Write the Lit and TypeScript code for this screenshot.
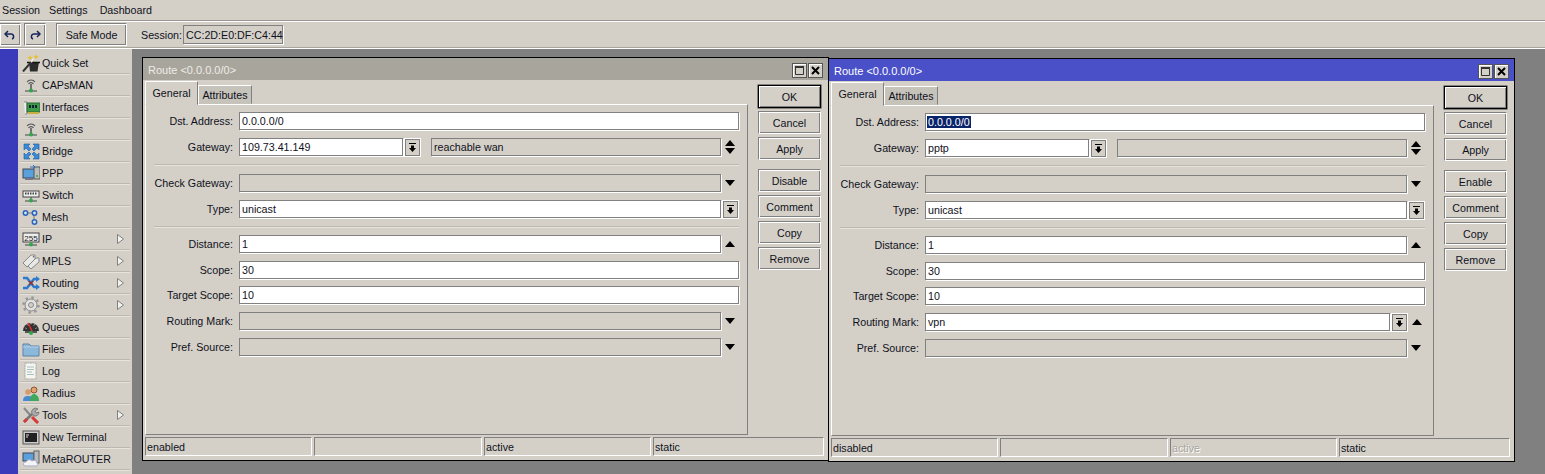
import { LitElement, html, css, svg } from "lit";
import { customElement } from "lit/decorators.js";

const base = svg`<path d="M3 15h12" stroke="#444" stroke-width="1"/><circle cx="9" cy="14.5" r="2" fill="#2fa84a"/>`;
const antenna = svg`<path d="M5 6a5 5 0 0 1 8 0M6.5 8a3 3 0 0 1 5 0" fill="none" stroke="#555" stroke-width="1.2"/><path d="M9 8v6" stroke="#555" stroke-width="1.5"/>${base}`;
const ICONS: Record<string, unknown> = {
  quick: svg`<path d="M7 8h10l-1.500 9.500H8z" fill="#2c2c2c"/><path d="M5 8.500h13" stroke="#111" stroke-width="1.500"/><path d="M1 17.500 11 6" stroke="#333" stroke-width="2"/><path d="M9 8l2.500-3" stroke="#eee" stroke-width="2"/><path d="M8 1l.8 2 2 .7-2 .7-.8 2-.8-2-2-.7 2-.7zM14 0l.8 2 2 .7-2 .7-.8 2-.8-2-2-.7 2-.7z" fill="#e8c020"/>`,
  caps: antenna,
  ifaces: svg`<path d="M2 4h3v12H3" fill="#eee" stroke="#888"/><rect x="5" y="5" width="13" height="9" fill="#3f9a4a" stroke="#2c6a34"/><path d="M7 7h2v3H7zM10 7h2v3h-2zM13 7h2v3h-2z" fill="#123"/><path d="M6 14h11v2H6z" fill="#c8b040"/>`,
  wireless: antenna,
  bridge: svg`<g fill="#3a8ad8" stroke="#1c5c9c" stroke-width=".6"><path d="M2 2h6L6 4l3 3-2 2-3-3-2 2zM17 2v6l-2-2-3 3-2-2 3-3-2-2zM2 17v-6l2 2 3-3 2 2-3 3 2 2zM17 17h-6l2-2-3-3 2-2 3 3 2-2z"/></g>`,
  ppp: svg`<rect x="1" y="5" width="12" height="9" fill="#5aa0dc" stroke="#445"/><rect x="12" y="3" width="6" height="12" fill="#bbb" stroke="#555"/><path d="M3 14h8v2H3z" fill="#778"/><path d="M8 3h5M11 1l2 2-2 2" stroke="#2a70c0" fill="none"/><circle cx="15" cy="12" r="1" fill="#2fa84a"/>`,
  switch: svg`<rect x="1" y="5" width="16" height="6" fill="#eee" stroke="#444"/><path d="M3 7.500h12" stroke="#444" stroke-width="2" stroke-dasharray="1.500 1"/><path d="M9 11v3" stroke="#555"/>${base}`,
  mesh: svg`<path d="M4 5h6M12 7v7" stroke="#777" fill="none"/><g fill="#cfe2f6" stroke="#2c64b8" stroke-width="1.500"><circle cx="3.500" cy="5" r="2.200"/><circle cx="12.500" cy="5" r="2.200"/><circle cx="12.500" cy="14" r="2.200"/></g>`,
  ip: svg`<rect x="1" y="3" width="16" height="9" fill="#eee" stroke="#444"/><text x="9" y="10.500" font-size="8" font-family="Liberation Sans" text-anchor="middle" fill="#222">255</text>${base}`,
  mpls: svg`<path d="M1 11 9 3h4v4l-8 8zM6 14 14 6h3v4l-8 7z" fill="#e8e8e4" stroke="#888"/><circle cx="11.500" cy="4.800" r=".8" fill="#666"/>`,
  routing: svg`<path d="M1 4h4l7 9h3M1 14h4l7-9h3" fill="none" stroke="#2a7ad0" stroke-width="2.500"/><path d="M14 2l4 3-4 3zM14 10l4 3-4 3z" fill="#2a7ad0"/><path d="M7 7l4 4M11 7l-4 4" stroke="#a0302a" stroke-width="1.200"/>`,
  system: svg`<circle cx="9" cy="9" r="7.500" fill="none" stroke="#999" stroke-width="2.500" stroke-dasharray="2.500 3.400"/><circle cx="9" cy="9" r="6" fill="#e2e2e0" stroke="#8c8c8c"/><circle cx="9" cy="9" r="2.500" fill="#d4d0c8" stroke="#8c8c8c"/>`,
  queues: svg`<path d="M1 13a8 8 0 0 1 16 0z" fill="#333"/><path d="M3.500 10l1 .5M5.500 6.500l.7 1M9 5v1.200M12.500 6.500l-.7 1M14.500 10l-1 .5" stroke="#ddd"/><path d="M3 14h12" stroke="#555" stroke-width="2"/><path d="M6 5l4 8" stroke="#e03030" stroke-width="1.500"/><circle cx="9" cy="15" r="2" fill="#2fa84a"/>`,
  files: svg`<path d="M1 4h6l2 2h8v10H1z" fill="#8cb8dc" stroke="#5c82a4"/><path d="M1 7h16" stroke="#b4d0e8"/>`,
  log: svg`<path d="M3 1h11v16H3z" fill="#f6f6ee" stroke="#aaa" stroke-dasharray="2 .5"/><path d="M5 5h7M5 7.500h7M5 10h5M5 12.500h7" stroke="#a4c0c8"/>`,
  radius: svg`<circle cx="6" cy="8" r="2.800" fill="#d89a68"/><path d="M1 17c0-4 2-5 5-5s5 1 5 5z" fill="#4a8ad0"/><circle cx="12" cy="6" r="3" fill="#e0a070" stroke="#7a4020" stroke-width=".8"/><path d="M8 17c0-5 2-7 4-7s5 2 5 7z" fill="#3fa85c"/>`,
  tools: svg`<path d="M2 2l7 8" stroke="#888" stroke-width="2"/><path d="M10 11l6 6" stroke="#d83838" stroke-width="3"/><path d="M2 16l8-8" stroke="#777" stroke-width="2.500"/><path d="M2 16l3-3" stroke="#d83838" stroke-width="3"/><path d="M10 8a4 4 0 0 1 6-5l-3 2 1 2 3-1a4 4 0 0 1-5 4z" fill="#aaa" stroke="#555" stroke-width=".6"/>`,
  terminal: svg`<rect x="1" y="3" width="16" height="13" fill="#ccc" stroke="#555"/><rect x="3" y="5" width="12" height="9" fill="#222"/><path d="M4 7h3M4 9h2" stroke="#ddd"/>`,
  meta: svg`<rect x="1" y="3" width="11" height="8" fill="#5aa0dc" stroke="#445"/><rect x="12" y="1" width="5" height="12" fill="#bbb" stroke="#666"/><path d="M3 16a2 2 0 0 1 1-4 3.500 3.500 0 0 1 6-1 3 3 0 0 1 5 2 2 2 0 0 1 0 3z" fill="#f4f4f4" stroke="#aac"/>`,
  more: svg`<circle cx="7" cy="7" r="3" fill="#d04030"/><circle cx="12" cy="8" r="3" fill="#3fa85c"/>`,
};

const MENU: [string, string, boolean][] = [
  ["Quick Set", "quick", false], ["CAPsMAN", "caps", false], ["Interfaces", "ifaces", false],
  ["Wireless", "wireless", false], ["Bridge", "bridge", false], ["PPP", "ppp", false],
  ["Switch", "switch", false], ["Mesh", "mesh", false], ["IP", "ip", true], ["MPLS", "mpls", true],
  ["Routing", "routing", true], ["System", "system", true], ["Queues", "queues", false],
  ["Files", "files", false], ["Log", "log", false], ["Radius", "radius", false],
  ["Tools", "tools", true], ["New Terminal", "terminal", false], ["MetaROUTER", "meta", false], ["", "more", false],
];

const up = html`<svg class="arr" viewBox="0 0 10 6" width="10" height="6"><path d="M5 0l5 6H0z"/></svg>`;
const down = html`<svg class="arr" viewBox="0 0 10 6" width="10" height="6"><path d="M0 0h10L5 6z"/></svg>`;
const drop = html`<span class="btn-drop"><svg viewBox="0 0 9 10" width="9" height="10"><path d="M1 1h7v1H1zM3 3.500h3V6h2L4.500 10 1 6h2z"/></svg></span>`;

interface Win {
  cls: string; gateway: string; selected: boolean; toggle: string; routing: string; status: string; activeOff: boolean; extra: string;
}
const WINS: Win[] = [
  { cls: "w1", gateway: "109.73.41.149", selected: false, toggle: "Disable", routing: "", status: "enabled", activeOff: false, extra: "reachable wan" },
  { cls: "w2 focus", gateway: "pptp", selected: true, toggle: "Enable", routing: "vpn", status: "disabled", activeOff: true, extra: "" },
];

@customElement("app-root")
export class AppRoot extends LitElement {
  static styles = css`
    :host { display: block; width: 1545px; height: 474px; overflow: hidden; background: #d4d0c8; color: #10101c; font: 10.7px "Liberation Sans", Arial, sans-serif; }
    * { box-sizing: border-box; }
    .menubar { height: 22px; display: flex; align-items: center; gap: 12px; padding: 0 0 2px 2px; border-bottom: 1px solid #fff; box-shadow: inset 0 -1px 0 #9a9890; }
    .m-first { width: 35px; white-space: nowrap; }
    .toolbar { height: 27px; display: flex; align-items: center; border-bottom: 1px solid #fff; box-shadow: inset 0 -1px 0 #a8a59c; padding-bottom: 1px; }
    .etched { display: flex; align-items: center; justify-content: center; background: #d4d0c8; border: 1px solid; border-color: #808080 #fff #fff #808080; box-shadow: inset 1px 1px 0 #fff, inset -1px -1px 0 #808080; }
    .tool { width: 22px; height: 23px; margin-right: 3px; }
    .tool:first-child { margin-left: -1px; }
    .safe { width: 71px; height: 23px; margin-left: 7px; margin-right: 14px; }
    .sess-lab { width: 42px; flex: none; }
    .sess { width: 100px; height: 19px; padding-left: 2px; border: 1px solid #808080; box-shadow: 1px 1px 0 #fff; display: flex; align-items: center; background: #d4d0c8; white-space: nowrap; }
    .main { display: flex; height: 425px; }
    .strip { width: 18px; background: #3a3bbb; }
    .side { width: 114px; padding-top: 3px; overflow: hidden; display: flex; flex-direction: column; flex: none; }
    .item { flex: none; height: 22px; display: flex; align-items: center; margin: 0 2px; padding-left: 2px; border-bottom: 1px solid #bdb9b0; box-shadow: 0 1px 0 #e6e3dc; position: relative; }
    .item svg { flex: none; margin-right: 2px; }
    .item .lbl { flex: 1; }
    .item svg.sub { width: 7px; height: 10px; margin-right: 6px; }
    .desk { flex: 1; background: #808080; position: relative; overflow: hidden; }
    .win { position: absolute; width: 687px; height: 404px; background: #d4d0c8; border: 1px solid #000; display: flex; flex-direction: column; }
    .w1 { left: 10px; top: 8px; }
    .w2 { left: 696px; top: 9px; }
    .title { height: 22px; flex: none; display: flex; align-items: center; padding: 2px 5px 0 5px; background: #a8a59c; color: #eeece6; font-size: 11px; }
    .focus .title { background: #4a50c8; color: #fff; }
    .title .t { flex: 1; }
    .wb { width: 15px; height: 15px; margin-left: 1px; display: flex; align-items: center; justify-content: center; background: #d4d0c8; border: 1px solid #555; box-shadow: inset 1px 1px 0 #fff; }
    .body { flex: 1; display: flex; min-height: 0; }
    .left { width: 605px; padding-left: 2px; display: flex; flex-direction: column; flex: none; }
    .tabs { height: 24px; display: flex; align-items: flex-end; flex: none; }
    .tab { display: flex; align-items: center; justify-content: center; border: 1px solid; border-color: #fff #808080 transparent #fff; }
    .tab.on { width: 53px; height: 24px; margin-bottom: -1px; position: relative; z-index: 1; background: #d4d0c8; }
    .tab.back { width: 54px; height: 19px; background: #c6c3bb; }
    .panel { width: 603px; height: 331px; border: 1px solid; border-color: #fff #808080 #808080 #fff; padding-top: 7px; display: flex; flex-direction: column; gap: 8px; }
    .row { height: 18px; display: flex; align-items: center; flex: none; }
    .row.tight { margin-top: -1px; }
    .lab { width: 87px; text-align: right; margin-right: 6px; white-space: nowrap; flex: none; }
    .fld { height: 18px; border: 1px solid #808080; box-shadow: 1px 1px 0 #fff; background: #fff; padding-left: 2px; display: flex; align-items: center; flex: none; white-space: nowrap; overflow: hidden; }
    .fld.dis { background: #d4d0c8; }
    .full { width: 500px; }
    .wide { width: 482px; }
    .gw { width: 164px; }
    .gw2 { width: 290px; margin-left: 10px; }
    .rm { width: 465px; }
    .sel { background: #0a246a; color: #fff; padding: 0 1px; margin-left: -1px; }
    .btn-drop { width: 17px; height: 19px; margin-left: 1px; display: flex; align-items: center; justify-content: center; flex: none; border: 1px solid #fff; box-shadow: inset 0 0 0 1px #808080; }
    .arr { display: block; fill: #000; }
    .ac { width: 10px; margin-left: 4px; display: flex; flex-direction: column; gap: 2px; align-items: center; flex: none; }
    .sep { height: 2px; width: 585px; margin-left: 8px; background: #bdb9b0; border-bottom: 1px solid #e6e3dc; flex: none; }
    .btns { margin: 5px 0 0 10px; width: 63px; display: flex; flex-direction: column; gap: 3px; }
    .b { width: 63px; height: 23px; flex: none; }
    .b.def { border: 1px solid #000; box-shadow: 0 0 0 .5px #333, inset 1px 1px 0 #fff, inset -1px -1px 0 #808080; }
    .b.gap { margin-top: 6px; }
    .status { height: 19px; flex: none; margin: 2px 0 4px 2px; display: flex; gap: 2px; }
    .seg { height: 19px; border: 1px solid; border-color: #808080 #fff #fff #808080; padding-left: 1px; display: flex; align-items: center; }
    .s1 { width: 167px; } .s2 { width: 168px; } .s3 { width: 167px; } .s4 { width: 171px; }
    .muted { color: #a8a59c; text-shadow: 1px 1px 0 #fff; }
  `;

  private row(label: string, content: unknown, tight = false) {
    return html`<div class="row ${tight ? "tight" : ""}"><span class="lab">${label}</span>${content}</div>`;
  }

  private win(w: Win) {
    const dst = w.selected ? html`<span class="sel">0.0.0.0/0</span>` : "0.0.0.0/0";
    const second = html`<span class="fld dis gw2">${w.extra}</span><span class="ac">${up}${down}</span>`;
    const dis = html`<span class="fld dis wide"></span><span class="ac">${down}</span>`;
    const routing = w.routing
      ? html`<span class="fld rm">${w.routing}</span>${drop}<span class="ac">${up}</span>`
      : dis;
    return html`<section class="win ${w.cls}">
      <div class="title"><span class="t">Route &lt;0.0.0.0/0&gt;</span>
        <span class="wb"><svg viewBox="0 0 11 11" width="11" height="11"><path d="M1.500 1.500h8v8h-8z" fill="none" stroke="#333"/><path d="M1 2h9" stroke="#333" stroke-width="2"/></svg></span>
        <span class="wb"><svg viewBox="0 0 11 11" width="11" height="11"><path d="M2 2l7 7M9 2l-7 7" stroke="#000" stroke-width="2"/></svg></span>
      </div>
      <div class="body">
        <div class="left">
          <div class="tabs"><span class="tab on">General</span><span class="tab back">Attributes</span></div>
          <div class="panel">
            ${this.row("Dst. Address:", html`<span class="fld full">${dst}</span>`)}
            ${this.row("Gateway:", html`<span class="fld gw">${w.gateway}</span>${drop}${second}`)}
            <div class="sep"></div>
            ${this.row("Check Gateway:", dis)}
            ${this.row("Type:", html`<span class="fld wide">unicast</span>${drop}`)}
            <div class="sep"></div>
            ${this.row("Distance:", html`<span class="fld wide">1</span><span class="ac">${up}</span>`, true)}
            ${this.row("Scope:", html`<span class="fld full">30</span>`)}
            ${this.row("Target Scope:", html`<span class="fld full">10</span>`, true)}
            ${this.row("Routing Mark:", routing)}
            ${this.row("Pref. Source:", dis)}
          </div>
        </div>
        <div class="btns">
          <span class="etched b def">OK</span>
          <span class="etched b">Cancel</span>
          <span class="etched b">Apply</span>
          <span class="etched b gap">${w.toggle}</span>
          <span class="etched b">Comment</span>
          <span class="etched b">Copy</span>
          <span class="etched b">Remove</span>
        </div>
      </div>
      <div class="status">
        <span class="seg s1">${w.status}</span><span class="seg s2"></span>
        <span class="seg s3 ${w.activeOff ? "muted" : ""}">active</span><span class="seg s4">static</span>
      </div>
    </section>`;
  }

  render() {
    return html`
      <div class="menubar"><span class="m-first">Session</span><span>Settings</span><span>Dashboard</span></div>
      <div class="toolbar">
        <span class="etched tool"><svg viewBox="0 0 12 10" width="12" height="10"><path d="M4 1 1 4l3 3" fill="none" stroke="#14245c" stroke-width="1.500"/><path d="M2 4h5a2.600 2.600 0 0 1 1 5" fill="none" stroke="#14245c" stroke-width="1.500"/></svg></span>
        <span class="etched tool"><svg viewBox="0 0 12 10" width="12" height="10"><path d="M8 1l3 3-3 3" fill="none" stroke="#14245c" stroke-width="1.500"/><path d="M10 4H5a2.600 2.600 0 0 0-1 5" fill="none" stroke="#14245c" stroke-width="1.500"/></svg></span>
        <span class="etched safe">Safe Mode</span>
        <span class="sess-lab">Session:</span><span class="sess">CC:2D:E0:DF:C4:44</span>
      </div>
      <div class="main">
        <div class="strip"></div>
        <nav class="side">
          ${MENU.map(([name, icon, sub]) => html`<div class="item">
            <svg viewBox="0 0 18 18" width="18" height="18">${ICONS[icon]}</svg>
            <span class="lbl">${name}</span>
            ${sub ? html`<svg class="sub" viewBox="0 0 7 10"><path d="M.500.500l6 4.500-6 4.500z" fill="#f4f2ec" stroke="#808080"/></svg>` : ""}
          </div>`)}
        </nav>
        <div class="desk">${WINS.map((w) => this.win(w))}</div>
      </div>`;
  }
}
